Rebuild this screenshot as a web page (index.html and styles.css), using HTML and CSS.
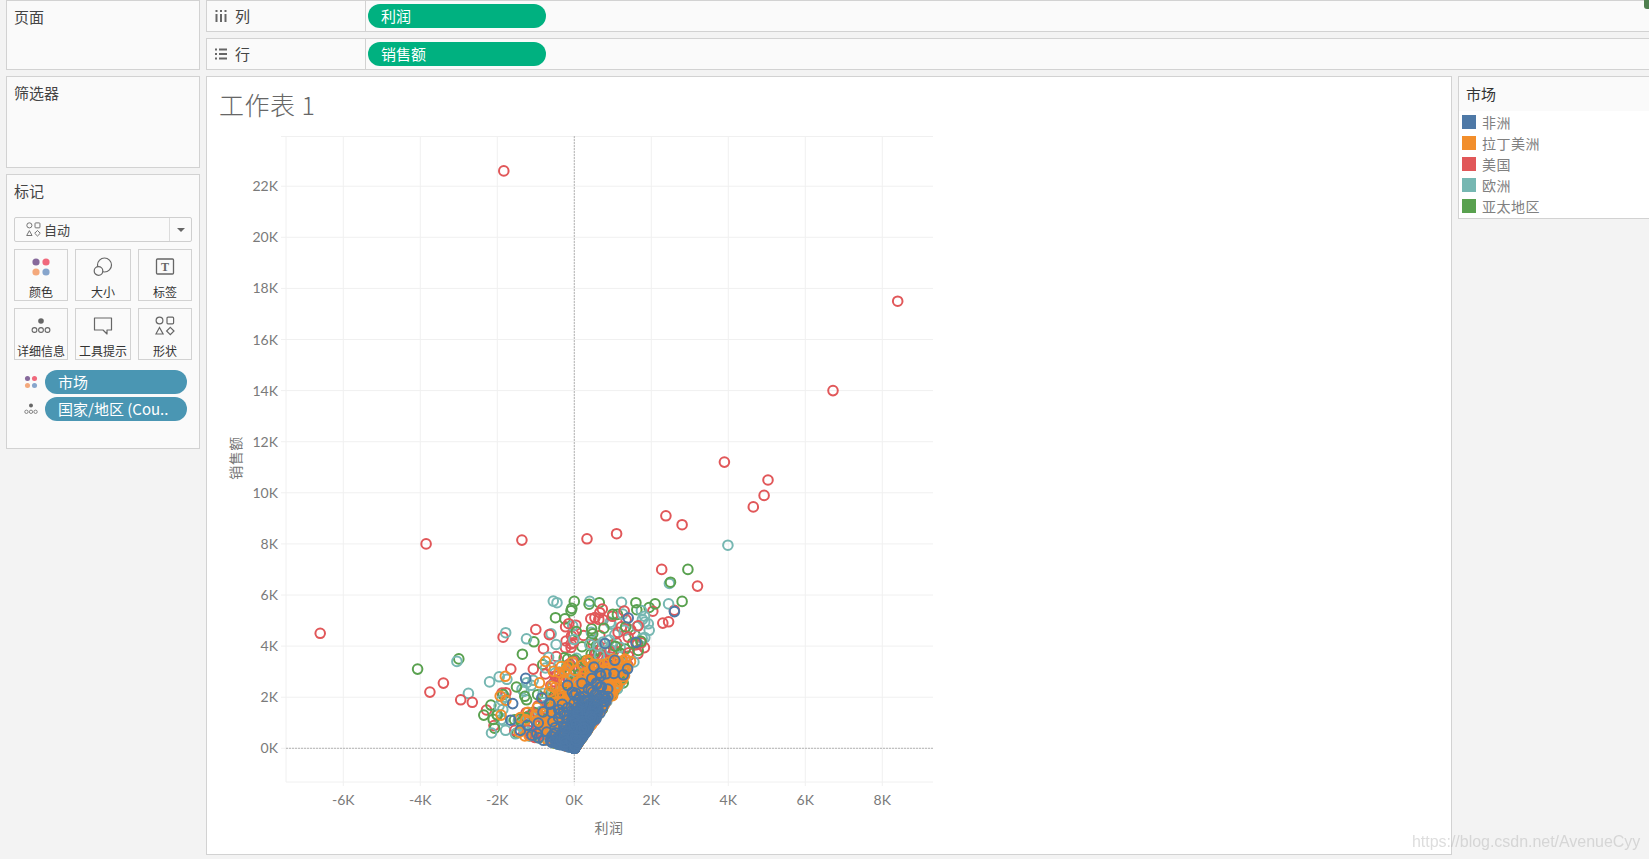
FILE: index.html
```html
<!DOCTYPE html>
<html lang="zh-CN">
<head>
    <meta charset="UTF-8">
    <title>工作表 1</title>
    <link rel="stylesheet" href="styles.css">
</head>
<body>
    <svg class="defs" width="0" height="0">
        <symbol id="iconDots" viewBox="0 0 20 20">
            <circle cx="5" cy="5" r="3.6" fill="#86699b"/>
            <circle cx="15" cy="5" r="3.6" fill="#f0697c"/>
            <circle cx="5" cy="15" r="3.6" fill="#f4a97c"/>
            <circle cx="15" cy="15" r="3.6" fill="#86a5cc"/>
        </symbol>
        <symbol id="iconDetail" viewBox="0 0 20 20">
            <circle cx="10" cy="5" r="2.8" fill="#666"/>
            <g fill="none" stroke="#666" stroke-width="1.1">
                <circle cx="3.5" cy="14" r="2.4"/>
                <circle cx="10" cy="14" r="2.4"/>
                <circle cx="16.5" cy="14" r="2.4"/>
            </g>
        </symbol>
        <symbol id="iconShapes" viewBox="0 0 20 20">
            <g fill="none" stroke="#666" stroke-width="1.2">
                <circle cx="4.5" cy="4.5" r="3.4"/>
                <rect x="12" y="1.2" width="6.6" height="6.6" rx="1"/>
                <path d="M4.5 11.5l3.6 6.5h-7.2z"/>
                <path d="M15.3 11.3l3.7 3.7-3.7 3.7-3.7-3.7z"/>
            </g>
        </symbol>
    </svg>

    <div class="app">
        <div class="side">
            <div class="panel panel-pages">页面</div>
            <div class="panel panel-filters">筛选器</div>
            <div class="panel panel-marks">
                <div class="marks-title">标记</div>
                <div class="dropdown">
                    <svg class="dropdown-icon"><use href="#iconShapes"/></svg>
                    <span class="dropdown-text">自动</span>
                    <span class="dropdown-arrow"></span>
                </div>
                <div class="cards">
                    <div class="card">
                        <svg class="card-icon"><use href="#iconDots"/></svg>
                        <span>颜色</span>
                    </div>
                    <div class="card">
                        <svg class="card-icon" viewBox="0 0 20 20">
                            <g fill="none" stroke="#666" stroke-width="1.2">
                                <circle cx="11.5" cy="8" r="7"/>
                                <circle cx="5.5" cy="14" r="4.3" fill="#fafafa"/>
                            </g>
                        </svg>
                        <span>大小</span>
                    </div>
                    <div class="card">
                        <svg class="card-icon" viewBox="0 0 20 20">
                            <rect x="1.5" y="2" width="17" height="15" rx="1" fill="none" stroke="#666" stroke-width="1.3"/>
                            <text class="icon-t" x="10" y="14">T</text>
                        </svg>
                        <span>标签</span>
                    </div>
                    <div class="card">
                        <svg class="card-icon"><use href="#iconDetail"/></svg>
                        <span>详细信息</span>
                    </div>
                    <div class="card">
                        <svg class="card-icon" viewBox="0 0 20 20">
                            <path d="M1.5 2h17v12h-4.5v4l-4-4h-8.500z" fill="none" stroke="#666" stroke-width="1.2" stroke-linejoin="round"/>
                        </svg>
                        <span>工具提示</span>
                    </div>
                    <div class="card">
                        <svg class="card-icon"><use href="#iconShapes"/></svg>
                        <span>形状</span>
                    </div>
                </div>
                <div class="mark-row">
                    <svg class="mark-icon"><use href="#iconDots"/></svg>
                    <div class="pill pill-blue">市场</div>
                </div>
                <div class="mark-row">
                    <svg class="mark-icon"><use href="#iconDetail"/></svg>
                    <div class="pill pill-blue">国家/地区 (Cou..</div>
                </div>
            </div>
        </div>

        <div class="main">
            <div class="shelf">
                <div class="shelf-label">
                    <svg class="shelf-icon" viewBox="0 0 12 12">
                        <path d="M1.500 0v2M1.500 4v8M6 0v2M6 4v8M10.500 0v2M10.500 4v8" stroke="#666" stroke-width="2"/>
                    </svg>
                    列
                </div>
                <div class="pill pill-green">利润</div>
            </div>
            <div class="shelf">
                <div class="shelf-label">
                    <svg class="shelf-icon" viewBox="0 0 12 12">
                        <path d="M0 1.500h2M4 1.500h8M0 6h2M4 6h8M0 10.500h2M4 10.500h8" stroke="#666" stroke-width="2"/>
                    </svg>
                    行
                </div>
                <div class="pill pill-green">销售额</div>
            </div>
            <div class="content">
                <div class="sheet">
                    <h1 class="sheet-title">工作表 1</h1>
                    <svg id="chart" class="chart" width="760" height="716"></svg>
                </div>
                <div class="legend">
                    <div class="legend-title">市场</div>
                    <div class="legend-row"><i class="swatch swatch-blue"></i>非洲</div>
                    <div class="legend-row"><i class="swatch swatch-orange"></i>拉丁美洲</div>
                    <div class="legend-row"><i class="swatch swatch-red"></i>美国</div>
                    <div class="legend-row"><i class="swatch swatch-teal"></i>欧洲</div>
                    <div class="legend-row"><i class="swatch swatch-green"></i>亚太地区</div>
                </div>
            </div>
        </div>
    </div>

    <div class="corner-dot"></div>
    <div class="watermark">https://blog.csdn.net/AvenueCyy</div>

    <script src="chart.js"></script>
</body>
</html>
```

FILE: styles.css
```css
* {
    box-sizing: border-box;
}
html, body {
    margin: 0;
    height: 859px;
    overflow: hidden;
}
body {
    background-color: #f3f3f3;
    color: #444;
    font-family: "Noto Sans CJK SC", "Noto Sans", sans-serif;
    font-size: 15px;
    position: relative;
}
.defs {
    position: absolute;
}
.app {
    display: flex;
    gap: 6px;
    padding-left: 6px;
    height: 859px;
}
.side {
    display: flex;
    flex-direction: column;
    gap: 6px;
    width: 194px;
    flex: none;
}
.panel {
    background-color: #fafafa;
    border: 1px solid #d2d2d2;
    padding: 6px 7px;
    line-height: 20px;
}
.panel-pages {
    height: 70px;
}
.panel-filters {
    height: 92px;
}
.panel-marks {
    height: 275px;
}
.marks-title {
    margin-bottom: 16px;
}
.dropdown {
    display: flex;
    align-items: center;
    width: 178px;
    height: 25px;
    border: 1px solid #cfcfcf;
    border-radius: 2px;
    font-size: 13px;
}
.dropdown-icon {
    width: 15px;
    height: 15px;
    margin-left: 11px;
    margin-right: 3px;
}
.dropdown-text {
    flex: 1;
}
.dropdown-arrow {
    position: relative;
    width: 22px;
    height: 100%;
    border-left: 1px solid #dcdcdc;
}
.dropdown-arrow::after {
    content: "";
    position: absolute;
    left: 7px;
    top: 10px;
    border-left: 4px solid transparent;
    border-right: 4px solid transparent;
    border-top: 4px solid #666;
}
.cards {
    display: grid;
    grid-template-columns: 54px 56px 54px;
    grid-auto-rows: 52px;
    gap: 7px;
    margin-top: 7px;
    margin-bottom: 10px;
}
.card {
    display: flex;
    flex-direction: column;
    align-items: center;
    border: 1px solid #d2d2d2;
    padding-top: 7px;
    font-size: 12px;
    line-height: 16px;
    white-space: nowrap;
    color: #333;
}
.card-icon {
    width: 20px;
    height: 20px;
    margin-bottom: 7px;
}
.icon-t {
    font-family: "Liberation Serif", serif;
    font-size: 12px;
    font-weight: bold;
    text-anchor: middle;
    fill: #666;
}
.mark-row {
    display: flex;
    align-items: center;
    margin-bottom: 3px;
}
.mark-icon {
    width: 14px;
    height: 14px;
    margin-left: 10px;
    margin-right: 7px;
    flex: none;
}
.pill {
    height: 24px;
    line-height: 23px;
    border-radius: 12px;
    color: white;
    padding-left: 13px;
    font-size: 15px;
    white-space: nowrap;
}
.pill-blue {
    width: 142px;
    background-color: #4a96b3;
}
.pill-green {
    width: 178px;
    margin-left: 2px;
    background-color: #00b180;
}
.main {
    flex: 1;
    min-width: 0;
    display: flex;
    flex-direction: column;
    gap: 6px;
}
.shelf {
    display: flex;
    align-items: center;
    height: 32px;
    flex: none;
    background-color: #fafafa;
    border: 1px solid #d2d2d2;
    border-right: none;
}
.shelf-label {
    display: flex;
    align-items: center;
    width: 159px;
    height: 100%;
    padding-left: 8px;
    padding-bottom: 1px;
    border-right: 1px solid #d2d2d2;
    font-size: 15px;
}
.shelf-icon {
    width: 12px;
    height: 12px;
    margin-right: 8px;
}
.content {
    display: flex;
    gap: 6px;
    height: 779px;
}
.sheet {
    width: 1246px;
    flex: none;
    background-color: white;
    border: 1px solid #d2d2d2;
}
.sheet-title {
    margin: 0;
    padding: 11px 12px 0;
    height: 59px;
    font-size: 25px;
    font-weight: 300;
    letter-spacing: 0.5px;
    line-height: 32px;
    color: #666;
}
.chart {
    display: block;
}
.tick {
    font-family: Lato, "Liberation Sans", sans-serif;
    font-size: 14px;
    fill: #7a7a7a;
}
.axis-title {
    font-size: 14px;
    letter-spacing: 0.5px;
    fill: #777;
    text-anchor: middle;
}
.legend {
    flex: 1;
    align-self: flex-start;
    height: 143px;
    background-color: white;
    border: 1px solid #d2d2d2;
    border-right: none;
}
.legend-title {
    height: 34px;
    padding-left: 7px;
    line-height: 34px;
    background-color: #fafafa;
    color: #333;
}
.legend-row {
    display: flex;
    align-items: center;
    height: 21px;
    padding-left: 3px;
    font-size: 14px;
    letter-spacing: 0.5px;
    color: #808080;
}
.swatch {
    width: 14px;
    height: 14px;
    margin-right: 6px;
}
.swatch-blue { background-color: #4e79a7; }
.swatch-orange { background-color: #f28e2b; }
.swatch-red { background-color: #e15759; }
.swatch-teal { background-color: #76b7b2; }
.swatch-green { background-color: #59a14f; }
.corner-dot {
    position: absolute;
    right: -3px;
    top: -3px;
    width: 8px;
    height: 12px;
    border-radius: 3px;
    background-color: #4f7f4f;
}
.watermark {
    position: absolute;
    left: 1412px;
    top: 833px;
    font-family: "Liberation Sans", sans-serif;
    font-size: 16px;
    letter-spacing: -0.03px;
    color: rgba(170, 170, 170, 0.4);
    filter: blur(0.4px);
}
```

FILE: chart.js
```js
const NS = 'http://www.w3.org/2000/svg';
const chart = document.getElementById('chart');

// where the svg starts on the page
const LEFT = 207, TOP = 136;
const zeroX = 574.3 - LEFT, zeroY = 748.3 - TOP;
const perKX = 38.5, perKY = 25.55;
const plotLeft = 286 - LEFT, plotRight = 933 - LEFT, plotTop = 0.5, plotBottom = 782 - TOP;

const colors = {
    blue: '#4e79a7',
    orange: '#f28e2b',
    red: '#e15759',
    teal: '#76b7b2',
    green: '#59a14f'
};

// points that sit away from the cloud: [profit K, sales K]
const outliers = {
    red: [[-1.83, 22.6], [8.4, 17.5], [6.72, 14], [3.9, 11.2], [5.03, 10.5], [4.93, 9.9], [4.65, 9.45],
        [2.38, 9.1], [2.8, 8.75], [-3.85, 8], [-1.36, 8.15], [0.33, 8.2], [1.1, 8.4], [2.27, 7], [3.2, 6.35],
        [-6.6, 4.5], [-1.85, 4.35], [-1, 4.65], [-0.65, 4.45], [-1.65, 3.1], [-3.75, 2.2], [-3.4, 2.55],
        [-2.95, 1.9], [-2.65, 1.8], [-2.28, 1.5], [-0.8, 3.9], [2.45, 4.95], [2.3, 4.9], [2.6, 5.4]],
    teal: [[3.99, 7.95], [-0.45, 5.7], [0.4, 5.75], [2.47, 6.45], [2.45, 5.65], [-2.15, 0.6], [-2.75, 2.15],
        [-3.05, 3.4], [-2.2, 2.6], [-1.95, 2.8], [-1.75, 2.7], [-1.8, 2]],
    green: [[-4.07, 3.1], [-3, 3.5], [2.95, 7], [2.8, 5.75], [2.5, 6.5], [1.6, 5.7], [2.1, 5.65], [-2.35, 1.3],
        [0, 5.75], [0.65, 5.7], [-1.5, 2.4], [-2, 1.3], [-1.85, 2.1], [1, 5.25]],
    orange: [[-1.9, 1.3], [-0.75, 3.4], [-1.4, 1.2], [-0.2, 3.1]],
    blue: [[2.6, 5.35], [1.4, 5.1], [0.8, 4.1], [1.6, 4.15], [-1.6, 1.75], [-1.65, 1.1], [-1.4, 0.7]]
};

// seeded so that every load draws the same picture
let seed = 20190412;
function rand() {
    seed = (seed + 0x6D2B79F5) | 0;
    let t = Math.imul(seed ^ (seed >>> 15), 1 | seed);
    t = (t + Math.imul(t ^ (t >>> 7), 61 | t)) ^ t;
    return ((t ^ (t >>> 14)) >>> 0) / 4294967296;
}
function expo(mean) {
    return -Math.log(1 - rand()) * mean;
}

function cloud(color, count, meanSales, maxSales, negShare, negMean) {
    const points = [];
    while (points.length < count) {
        let sales, profit;
        if (rand() < negShare) {
            profit = -expo(negMean);
            sales = 0.37 * Math.abs(profit) + expo(meanSales * 0.7);
        } else {
            sales = expo(meanSales);
            profit = sales * (0.5 * Math.pow(rand(), 0.7) - 0.12 * rand());
        }
        if (sales > maxSales || profit < -2300) continue;
        points.push({ color: color, x: profit / 1000, y: sales / 1000 });
    }
    return points;
}

function add(parent, name, attrs, text) {
    const el = document.createElementNS(NS, name);
    for (const key in attrs) el.setAttribute(key, attrs[key]);
    if (text) el.textContent = text;
    parent.appendChild(el);
    return el;
}

function px(k) { return zeroX + k * perKX; }
function py(k) { return zeroY - k * perKY; }

function gridLine(x1, y1, x2, y2) {
    add(chart, 'line', { x1: x1, y1: y1, x2: x2, y2: y2, stroke: '#f0f0f0', 'stroke-width': 1 });
}

function drawAxes() {
    gridLine(plotLeft, 0, plotLeft, plotBottom);
    gridLine(plotLeft - 5, plotTop, plotRight, plotTop);
    gridLine(plotLeft, plotBottom, plotRight, plotBottom);

    for (let k = -6; k <= 8; k += 2) {
        gridLine(px(k), 0, px(k), plotBottom + 4);
        add(chart, 'text', { class: 'tick', x: px(k), y: plotBottom + 23, 'text-anchor': 'middle' }, k + 'K');
    }
    for (let k = 0; k <= 22; k += 2) {
        gridLine(plotLeft - 5, py(k), plotRight, py(k));
        add(chart, 'text', { class: 'tick', x: plotLeft - 8, y: py(k) + 5, 'text-anchor': 'end' }, k + 'K');
    }

    const dash = { stroke: '#b5b5b5', 'stroke-width': 1, 'stroke-dasharray': '2 1' };
    add(chart, 'line', Object.assign({ x1: zeroX, y1: 0, x2: zeroX, y2: plotBottom }, dash));
    add(chart, 'line', Object.assign({ x1: plotLeft, y1: zeroY, x2: plotRight, y2: zeroY }, dash));

    add(chart, 'text', { class: 'axis-title', x: 402, y: 697 }, '利润');
    add(chart, 'text', {
        class: 'axis-title',
        transform: 'translate(34 322) rotate(-90)'
    }, '销售额');
}

function drawPoints() {
    let back = [
        ...cloud('green', 460, 1600, 5800, 0.25, 520),
        ...cloud('teal', 460, 1550, 5800, 0.28, 520),
        ...cloud('red', 520, 1700, 5600, 0.22, 480)
    ];
    // outliers of the three back colours go in with the shuffled cloud
    ['green', 'teal', 'red'].forEach(function (name) {
        outliers[name].forEach(function (p) {
            back.push({ color: name, x: p[0], y: p[1] });
        });
    });
    back = back.map(function (p) { return [rand(), p]; })
        .sort(function (a, b) { return a[0] - b[0]; })
        .map(function (pair) { return pair[1]; });

    const front = [
        ...cloud('orange', 1100, 1150, 3500, 0.16, 360),
        ...outliers.orange.map(function (p) { return { color: 'orange', x: p[0], y: p[1] }; }),
        ...cloud('blue', 800, 650, 3900, 0.14, 300),
        ...outliers.blue.map(function (p) { return { color: 'blue', x: p[0], y: p[1] }; })
    ];

    const group = add(chart, 'g', { fill: 'none', 'stroke-width': 2 });
    back.concat(front).forEach(function (p) {
        add(group, 'circle', { cx: px(p.x).toFixed(1), cy: py(p.y).toFixed(1), r: 4.8, stroke: colors[p.color] });
    });
}

drawAxes();
drawPoints();
```
